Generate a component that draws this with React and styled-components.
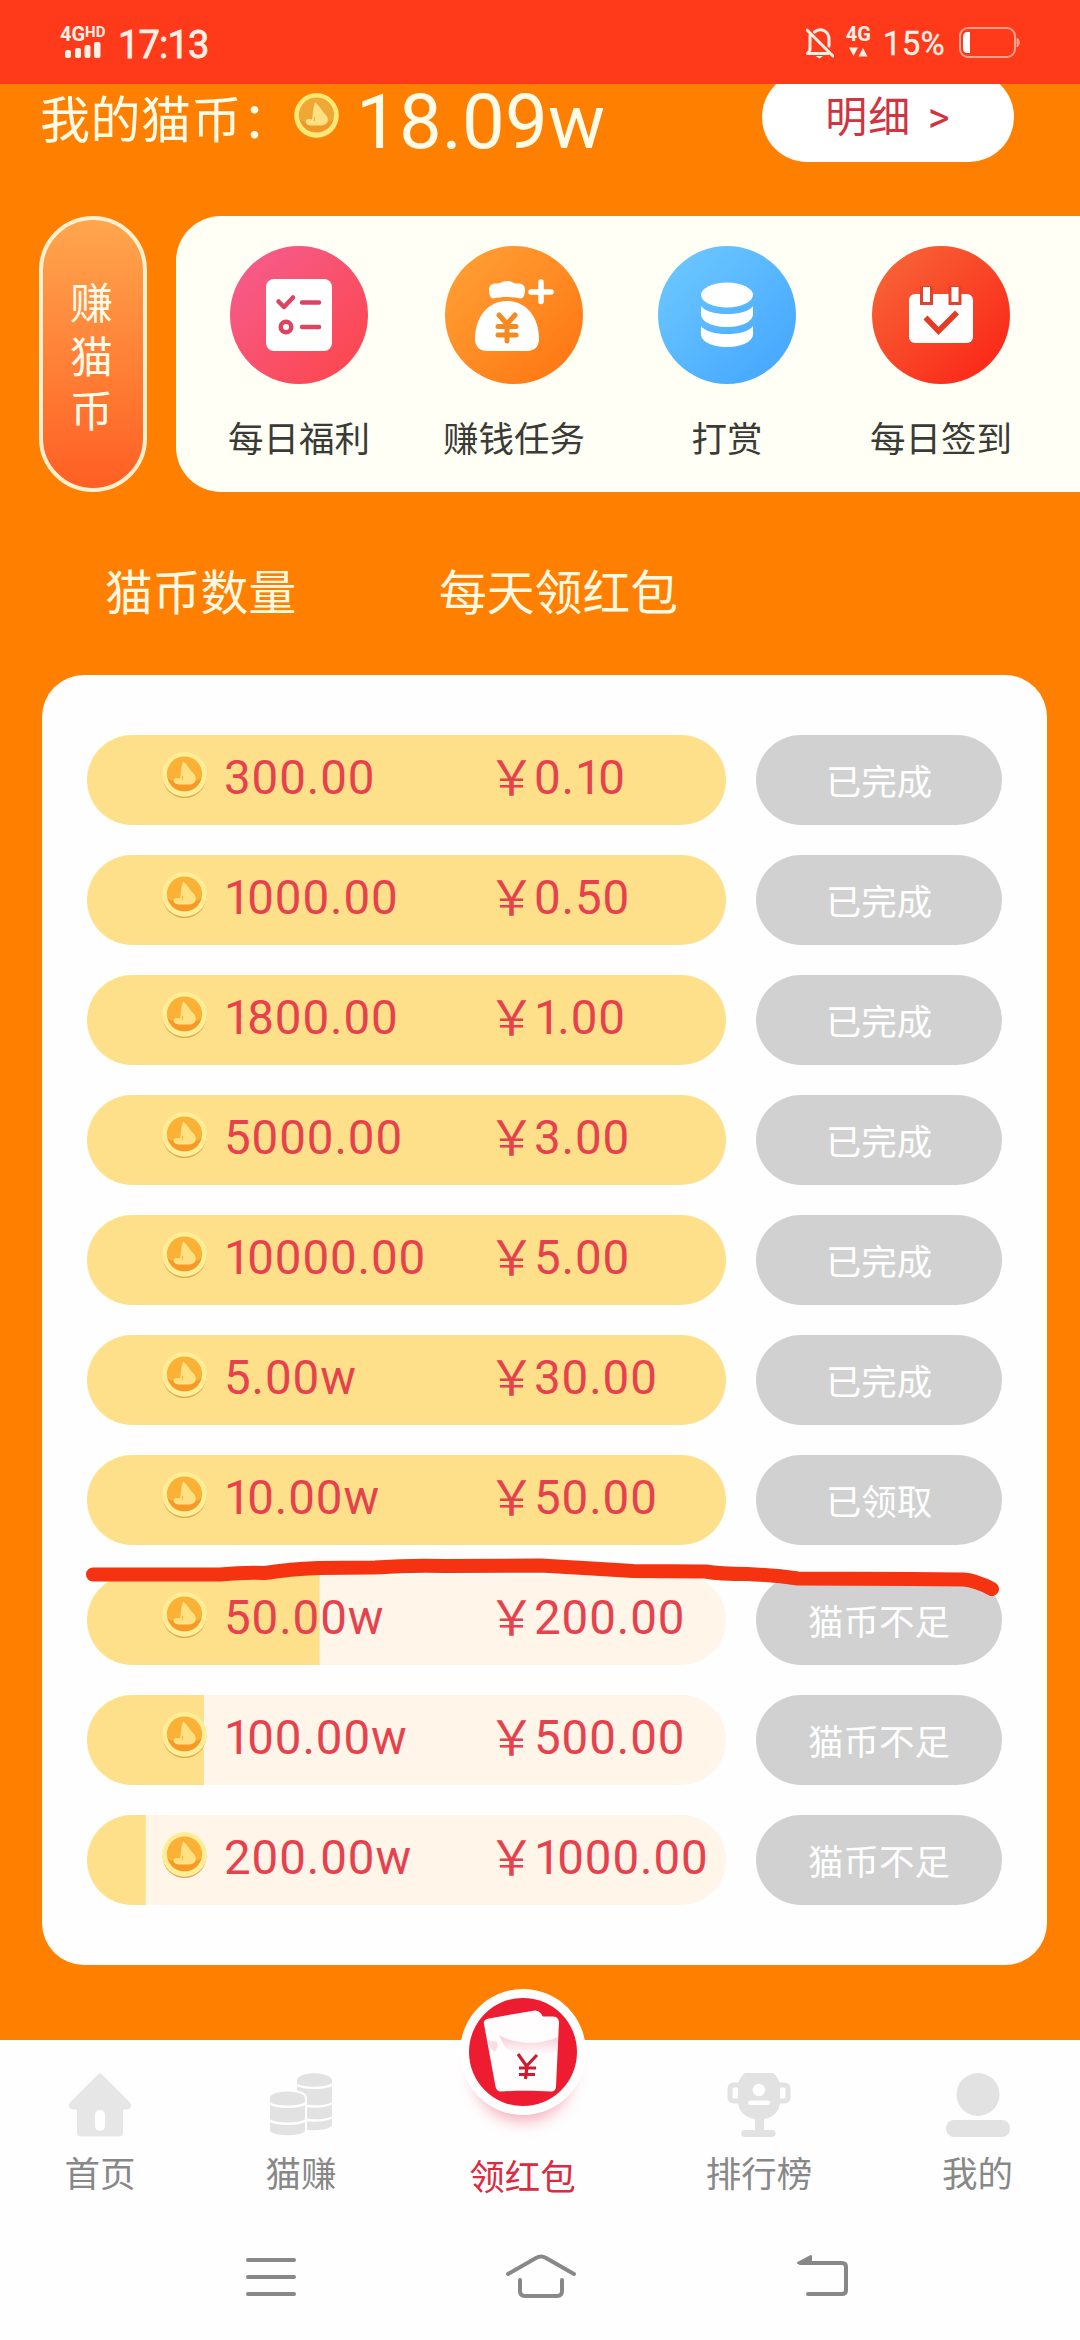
import React from "react";
import styled, { createGlobalStyle } from "styled-components";

const Global = createGlobalStyle`
  * { box-sizing: border-box; }
  body { margin: 0; background: #fefefe; font-family: Roboto, "Noto Sans CJK SC", sans-serif; }
`;

const Screen = styled.div`
  width: 1080px;
  height: 2340px;
  display: flex;
  flex-direction: column;
  overflow: hidden;
  background: #fefefe;
`;

/* ---------- status bar ---------- */
const StatusBar = styled.header`
  height: 84px;
  flex: none;
  background: #ff3a1b;
  color: #fff0e6;
  display: flex;
  justify-content: space-between;
  padding: 27px 60px 0 60px;
`;
const StatusGroup = styled.div`
  display: flex;
  align-items: flex-start;
  height: 34px;
`;
const Network = styled.div`
  display: flex;
  flex-direction: column;
  width: ${(p) => p.$w}px;
  margin-right: ${(p) => p.$gap}px;
`;
const NetworkText = styled.div`
  display: flex;
  align-items: flex-start;
  font-size: 20px;
  font-weight: 700;
  line-height: 15px;
  height: 15px;
  white-space: nowrap;
`;
const Hd = styled.span`
  font-size: 15px;
  line-height: 10px;
`;
const Clock = styled.div`
  font-size: 38px;
  line-height: 36px;
  font-weight: 400;
  -webkit-text-stroke: 0.8px currentColor;
  letter-spacing: -0.8px;
`;
const Percent = styled.div`
  font-size: 33px;
  line-height: 34px;
  margin-right: 14px;
  letter-spacing: 0.3px;
  -webkit-text-stroke: 0.3px currentColor;
`;

/* ---------- page ---------- */
const Page = styled.main`
  height: 1956px;
  flex: none;
  background: #ff8000;
  overflow: hidden;
  position: relative;
`;
const Balance = styled.section`
  height: 132px;
  display: flex;
  align-items: flex-start;
  padding: 0 66px 0 40px;
  color: #fffbe9;
`;
const BalanceLabel = styled.div`
  width: 254px;
  font-size: 50px;
  line-height: 74px;
  letter-spacing: 0.5px;
  white-space: nowrap;
`;
const BalanceCoin = styled.div`
  width: 62px;
  padding-top: 9px;
`;
const BalanceValue = styled.div`
  flex: 1;
  font-size: 76px;
  line-height: 76px;
  letter-spacing: 0.2px;
`;
const DetailButton = styled.button`
  width: 252px;
  height: 90px;
  margin-top: -12px;
  padding: 2px 0 0;
  border: 0;
  border-radius: 45px;
  background: #fff;
  color: #d0353f;
  font: 400 42px/86px Roboto, "Noto Sans CJK SC", sans-serif;
  letter-spacing: 1px;
  word-spacing: 5px;
`;

const Earn = styled.section`
  display: flex;
  height: 276px;
  padding-left: 39px;
`;
const EarnPill = styled.div`
  width: 108px;
  margin-right: 29px;
  padding: 7px 3px 0 0;
  border: 4px solid #fff0cf;
  border-radius: 54px;
  background: linear-gradient(#ffa64e, #ff5f23);
  color: #fffbe9;
  font-size: 43px;
  line-height: 54px;
  display: flex;
  flex-direction: column;
  align-items: center;
  justify-content: center;
`;
const EarnPanel = styled.div`
  flex: 1;
  display: flex;
  padding: 30px 0 0 16px;
  border-radius: 45px 0 0 45px;
  background: #fffff5;
`;
const EarnItem = styled.div`
  width: 214px;
  flex: none;
  display: flex;
  flex-direction: column;
  align-items: center;
  gap: 30px;
  font-size: 35.5px;
  line-height: 52px;
  color: #3a3a36;

  &:nth-child(2) { margin: 0 -1px 0 1px; }
`;
const Disc = styled.div`
  width: 138px;
  height: 138px;
  border-radius: 50%;
  background: linear-gradient(135deg, ${(p) => p.$from}, ${(p) => p.$to});
`;

const Columns = styled.div`
  height: 183px;
  display: flex;
  padding: 67px 0 0 105px;
  font-size: 47.8px;
  line-height: 70px;
  color: #fff8e2;
`;
const Column = styled.div`
  width: 334px;
`;

const Card = styled.section`
  margin: 0 33px 0 42px;
  height: 1290px;
  border-radius: 42px;
  background: #fefefe;
  padding: 60px 45px 0;
  display: flex;
  flex-direction: column;
  gap: 30px;
`;
const Row = styled.div`
  display: flex;
  gap: 30px;
  height: 90px;
`;
const Track = styled.div`
  width: 639px;
  border-radius: 45px;
  overflow: hidden;
  display: flex;
  align-items: flex-start;
  padding: 15px 0 0 75px;
  color: #e6424e;
  font-size: 47.5px;
  line-height: 56px;
  letter-spacing: 0.9px;
  background: linear-gradient(#fee08a, #fee08a) no-repeat left / ${(p) => p.$progress}% 100%, #fff5e8;
`;
const TrackCoin = styled.div`
  width: 62px;
  height: 45px;
  padding-top: 2px;
`;
const Amount = styled.div`
  width: 266px;
`;
const Reward = styled.div`
  white-space: nowrap;
  display: flex;
`;
const Yen = styled.span`
  width: 44px;
  font-family: "Noto Sans CJK SC", sans-serif;
  line-height: 50px;
  height: 56px;
  display: flex;
  justify-content: center;
`;
const NarrowDigit = styled.span`
  letter-spacing: -3.5px;
`;
const State = styled.button`
  width: 246px;
  height: 90px;
  border: 0;
  border-radius: 45px;
  padding: 5px 0 0;
  background: #d1d1d1;
  color: #fff;
  font: 400 35.5px/50px Roboto, "Noto Sans CJK SC", sans-serif;
`;
const Marker = styled.svg`
  position: absolute;
  left: 0;
  top: 1456px;
`;

/* ---------- tab bar ---------- */
const TabBar = styled.nav`
  height: 175px;
  flex: none;
  display: grid;
  grid-template-columns: 200px 202px 241px 232px 205px;
  position: relative;
`;
const Tab = styled.div`
  display: flex;
  flex-direction: column;
  align-items: center;
  padding-top: 33px;
  gap: 13px;
  font-size: 35.5px;
  line-height: 50px;
  color: #888;
`;
const MainTab = styled(Tab)`
  padding-top: 0;
  gap: 0;
  color: #dc2a41;
`;
const Bubble = styled.div`
  width: 126px;
  height: 126px;
  margin: -51px 0 38px;
  border-radius: 50%;
  background: #fff;
  display: flex;
  align-items: center;
  justify-content: center;
  box-shadow: 0 20px 16px -14px rgba(235, 70, 95, 0.45);
`;
const SystemNav = styled.footer`
  flex: 1;
  display: flex;
  align-items: flex-start;
  padding: 36px 0 0 242px;
`;
const Key = styled.div`
  width: ${(p) => p.$w}px;
`;

/* ---------- icons ---------- */
const Coin = ({ rim = "#ffe873", face = "#efa835" }) => (
  <svg width="45" height="47" viewBox="0 0 45 47" display="block">
    <circle cx="22.5" cy="24.3" r="21.800" fill="#d09a3c" opacity=".8" />
    <circle cx="22.5" cy="22.4" r="22.3" fill={rim} />
    <circle cx="22.5" cy="22" r="17.6" fill={face} />
    <path d="M5.500 26a17.600 17.600 0 0 0 34 0c-5 6-29 6-34 0z" fill="#f08c1e" opacity=".6" />
    <path d="M21 9.500C25 12 27 17 32 22c4 5 1 10.500-5 10.500H17c-4 0-6-3-5-5 1-2 4-1.500 6-1 1-6 1-11 3-17z" fill="#ffe183" />
    <path d="M20.500 24v4" stroke={face} strokeWidth="1" />
  </svg>
);

const SignalBars = () => (
  <svg width="38" height="17" viewBox="0 0 38 17" style={{ marginLeft: 4 }} fill="#fff0e6">
    <rect x="1" y="8" width="6" height="8" rx="2" />
    <rect x="11" y="6" width="6" height="10" rx="2" />
    <rect x="20.500" y="3" width="6" height="13" rx="2" />
    <rect x="30" y="0" width="6.500" height="16" rx="2" />
  </svg>
);
const Arrows = () => (
  <svg width="20" height="10" viewBox="0 0 20 10" style={{ margin: "5px 0 0 3px" }} fill="#fff0e6">
    <path d="M0 0.500h9L4.500 9zM9.500 9.500h9L14 1z" />
  </svg>
);
const BellOff = () => (
  <svg width="28" height="32" viewBox="0 0 28 32" style={{ marginRight: 12 }} fill="none" stroke="#fff0e6" strokeWidth="3">
    <path d="M1 3l26 26M4 8v15L1.500 26.500H22M8.500 5C15-.5 23 5 23 12v7" strokeLinecap="round" strokeLinejoin="round" />
    <path d="M9.500 29h7.500l-3.700 2.600z" fill="#fff0e6" stroke="none" />
  </svg>
);
const Battery = () => (
  <svg width="61" height="32" viewBox="0 0 61 32" fill="none">
    <rect x="1" y="1" width="55" height="29" rx="8" stroke="#ffa28d" strokeWidth="2" />
    <path d="M58 11c3 2 3 7 0 9z" fill="#ffa28d" stroke="#ffa28d" />
    <path d="M11 5v21H8.500c-3 0-4.500-2-4.500-5V10c0-3 1.500-5 4.500-5z" fill="#fff" />
  </svg>
);

const ListIcon = () => (
  <svg width="138" height="138" viewBox="0 0 138 138" fill="none" strokeLinecap="round" strokeLinejoin="round">
    <rect x="36" y="33" width="66" height="72" rx="8" fill="#fff" />
    <g stroke="#dc4462" strokeWidth="4.500">
      <path d="M48.500 55.500l5.500 5.500 9-9.500M72 56.500h17M72 81h17" />
      <circle cx="56" cy="81" r="5.300" />
    </g>
  </svg>
);
const BagIcon = () => (
  <svg width="138" height="138" viewBox="0 0 138 138" fill="none" strokeLinecap="round" strokeLinejoin="round">
    <path d="M44 44c0-4 2-6.500 7-6.500 4 0 4-.5 6-1.500 3-1.500 7-1.500 10 0 2 1 2 1.500 6 1.500 5 0 7 2.500 7 6.500 0 5-2 8.500-4 8.500-8-2-20-2-28 0-2 0-4-3.500-4-8.500z" fill="#fff" />
    <path d="M42 105c-8 0-12-5-12-12 0-22 13-38 32-38s32 16 32 38c0 7-4 12-12 12z" fill="#fff" />
    <path d="M96 36v19.500M86 46h20" stroke="#fff" strokeWidth="5.500" />
    <path d="M54 69l8 9 8-9M53 80.500h18M53 89h18M62 79v16" stroke="#f58a22" strokeWidth="5" />
  </svg>
);
const StackIcon = () => (
  <svg width="138" height="138" viewBox="0 0 138 138" fill="#fff">
    <ellipse cx="69" cy="49" rx="26" ry="12.500" />
    <path d="M43 60c4 5.500 14 8 26 8s22-2.500 26-8v8c0 7.500-11 13-26 13s-26-5.500-26-13z" />
    <path d="M43 80c4 5.500 14 8 26 8s22-2.500 26-8v8c0 7.500-11 13-26 13s-26-5.500-26-13z" />
  </svg>
);
const CalendarIcon = () => (
  <svg width="138" height="138" viewBox="0 0 138 138" fill="none">
    <rect x="37" y="48" width="64" height="49" rx="6" fill="#fff" />
    <path d="M48 40h13v19H48zM76.500 40h13v19h-13z" fill="#e8402a" />
    <path d="M51 41h7v15h-7zM79.500 41h7v15h-7z" fill="#fff" />
    <path d="M53.500 71.500L66.500 85 85 66.500" stroke="#e53a25" strokeWidth="5.500" />
  </svg>
);

const HomeIcon = () => (
  <svg width="64" height="64" viewBox="0 0 64 64">
    <path d="M30 1.500q2-2 4 0l27 27c4 4 2 8-2 8h-4v23q0 4-4 4H13q-4 0-4-4V36.500H5c-4 0-6-4-2-8z" fill="#e6e6e6" />
    <rect x="27" y="37" width="10" height="21" rx="5" fill="#fefefe" />
  </svg>
);
const CoinsIcon = () => (
  <svg width="64" height="64" viewBox="0 0 64 64" fill="none">
    <path d="M28 7C30-2 60-2 63 7v45c-3 6-24 7-35 2z" fill="#e2e2e2" />
    <path d="M28 12c8 4 30 4 36-1M38 33c9 1 20 0 26-3M38 47c9 1 20 0 26-3" stroke="#fefefe" strokeWidth="2.400" />
    <path d="M0 25c0-10 37-10 37 0v33c-2 7-35 7-37 0z" fill="#e2e2e2" stroke="#fefefe" strokeWidth="2" />
    <path d="M0 30c6 5 31 5 37 0M0 47c6 5 31 5 37 0" stroke="#fefefe" strokeWidth="2.400" />
  </svg>
);
const TrophyIcon = () => (
  <svg width="64" height="64" viewBox="0 0 64 64" fill="none">
    <path d="M12 12H7q-4 0-4 4v8q0 4 4 4h5M52 12h5q4 0 4 4v8q0 4-4 4h-5" stroke="#e2e2e2" strokeWidth="5" />
    <path d="M18 0h28q4 3 7 10v18c0 11-8 17-16 18v11h8c5 0 5 7 0 7H18c-5 0-5-7 0-7h10V46c-9-1-17-7-17-18V10q3-7 7-10z" fill="#e2e2e2" />
    <circle cx="32" cy="17" r="6.300" fill="#fefefe" />
    <rect x="21" y="27.500" width="22" height="4.500" rx="2" fill="#fefefe" />
  </svg>
);
const UserIcon = () => (
  <svg width="64" height="64" viewBox="0 0 64 64" fill="#e2e2e2">
    <circle cx="32" cy="21.500" r="21.500" />
    <rect x="0" y="47" width="64" height="17" rx="8" />
  </svg>
);
const EnvelopeIcon = () => (
  <svg width="108" height="108" viewBox="0 0 108 108" fill="none">
    <defs>
      <linearGradient id="fold" x1="0" y1="0" x2="0" y2="1">
        <stop offset="0" stopColor="#f7bcc8" />
        <stop offset="1" stopColor="#ffffff" />
      </linearGradient>
    </defs>
    <circle cx="54" cy="54" r="54" fill="#ee1c30" />
    <path d="M15 26c-1-3 2-5 5-5.500l22-4 24-4c4 0 6 3 8 6h10c4 0 6 3 6 6l-3 64c0 3-2 5-5 5-16-1-34-1-50 0-3 0-5-2-5.500-5z" fill="#fffdfd" />
    <path d="M30 37c18 10 42 10 59 2l-1 14c-18 7-40 6-52-4z" fill="url(#fold)" opacity=".8" />
    <path d="M19 42l9 2 1 4-3 6-5-4z" fill="#f7c9d2" opacity=".6" />
    <path d="M29 35c3 8 38 13 59 4l1-10H30z" fill="#fffdfd" />
    <path d="M49 56l8.500 12L68 57M50 70h17M50 76.500h16M58 68l-1.500 13" stroke="#cf1b2e" strokeWidth="3.200" />
  </svg>
);

const MenuKey = () => (
  <svg width="58" height="50" viewBox="0 0 58 50" stroke="#888" strokeWidth="4" strokeLinecap="round">
    <path d="M6 9h46M6 26h46M6 43h46" />
  </svg>
);
const HomeKey = () => (
  <svg width="72" height="50" viewBox="0 0 72 50" fill="none" stroke="#888" strokeWidth="4" strokeLinecap="round" strokeLinejoin="round">
    <path d="M3 23L31 7q5-3 10 0l28 16M15 29v11q0 5 5 5h32q5 0 5-5V29" />
  </svg>
);
const BackKey = () => (
  <svg width="56" height="50" viewBox="0 0 56 50" fill="none" stroke="#888" strokeWidth="4" strokeLinecap="round">
    <path d="M5 12h42q4 0 4 4v23q0 4-4 4H13" />
    <path d="M3 12L16 5v7z" fill="#888" strokeWidth="2" strokeLinejoin="round" />
  </svg>
);

/* Digits are spaced evenly except for the 1, which takes less room. */
const Figures = ({ value }) =>
  value.split(/(1)/).filter(Boolean).map((part, i) =>
    part === "1" ? <NarrowDigit key={i}>1</NarrowDigit> : part
  );

/* ---------- data ---------- */
const earnItems = [
  { label: "每日福利", from: "#f55e92", to: "#fd4448", Icon: ListIcon },
  { label: "赚钱任务", from: "#ffa337", to: "#ff7310", Icon: BagIcon },
  { label: "打赏", from: "#70caff", to: "#41a4ff", Icon: StackIcon },
  { label: "每日签到", from: "#f76a3a", to: "#fb2014", Icon: CalendarIcon },
];

const tiers = [
  { amount: "300.00", reward: "0.10", state: "已完成", progress: 100 },
  { amount: "1000.00", reward: "0.50", state: "已完成", progress: 100 },
  { amount: "1800.00", reward: "1.00", state: "已完成", progress: 100 },
  { amount: "5000.00", reward: "3.00", state: "已完成", progress: 100 },
  { amount: "10000.00", reward: "5.00", state: "已完成", progress: 100 },
  { amount: "5.00w", reward: "30.00", state: "已完成", progress: 100 },
  { amount: "10.00w", reward: "50.00", state: "已领取", progress: 100 },
  { amount: "50.00w", reward: "200.00", state: "猫币不足", progress: 36.4 },
  { amount: "100.00w", reward: "500.00", state: "猫币不足", progress: 18.3 },
  { amount: "200.00w", reward: "1000.00", state: "猫币不足", progress: 9.2 },
];

export default function App() {
  return (
    <Screen>
      <Global />
      <StatusBar>
        <StatusGroup>
          <Network $w={48} $gap={10}>
            <NetworkText>4G<Hd>HD</Hd></NetworkText>
            <SignalBars />
          </Network>
          <Clock>17:13</Clock>
        </StatusGroup>
        <StatusGroup>
          <BellOff />
          <Network $w={26} $gap={11}>
            <NetworkText>4G</NetworkText>
            <Arrows />
          </Network>
          <Percent>15%</Percent>
          <Battery />
        </StatusGroup>
      </StatusBar>

      <Page>
        <Balance>
          <BalanceLabel>我的猫币：</BalanceLabel>
          <BalanceCoin><Coin /></BalanceCoin>
          <BalanceValue>18.09w</BalanceValue>
          <DetailButton>明细 &gt;</DetailButton>
        </Balance>

        <Earn>
          <EarnPill>
            <span>赚</span>
            <span>猫</span>
            <span>币</span>
          </EarnPill>
          <EarnPanel>
            {earnItems.map(({ label, from, to, Icon }) => (
              <EarnItem key={label}>
                <Disc $from={from} $to={to}><Icon /></Disc>
                {label}
              </EarnItem>
            ))}
          </EarnPanel>
        </Earn>

        <Columns>
          <Column>猫币数量</Column>
          <Column>每天领红包</Column>
        </Columns>

        <Card>
          {tiers.map((t) => (
            <Row key={t.amount}>
              <Track $progress={t.progress}>
                <TrackCoin><Coin rim="#ffed98" face="#fbb036" /></TrackCoin>
                <Amount><Figures value={t.amount} /></Amount>
                <Reward>
                  <Yen>￥</Yen>
                  <span><Figures value={t.reward} /></span>
                </Reward>
              </Track>
              <State>{t.state}</State>
            </Row>
          ))}
        </Card>

        <Marker width="1080" height="60" viewBox="0 1540 1080 60" fill="none">
          <path
            d="M93 1574.500L220 1574.500Q245 1572 265 1573Q290 1569 318 1568L375 1567.500Q410 1565 445 1566L540 1565.500L592 1568.500L633 1571L705 1571.500Q720 1574 747 1574Q774 1575 798 1578.500L912 1579L963 1579.500Q975 1580 992 1589"
            stroke="#f63310"
            strokeWidth="14"
            strokeLinecap="round"
            strokeLinejoin="round"
          />
        </Marker>
      </Page>

      <TabBar>
        <Tab><HomeIcon />首页</Tab>
        <Tab><CoinsIcon />猫赚</Tab>
        <MainTab>
          <Bubble><EnvelopeIcon /></Bubble>
          领红包
        </MainTab>
        <Tab><TrophyIcon />排行榜</Tab>
        <Tab><UserIcon />我的</Tab>
      </TabBar>

      <SystemNav>
        <Key $w={263}><MenuKey /></Key>
        <Key $w={290}><HomeKey /></Key>
        <Key $w={56}><BackKey /></Key>
      </SystemNav>
    </Screen>
  );
}
